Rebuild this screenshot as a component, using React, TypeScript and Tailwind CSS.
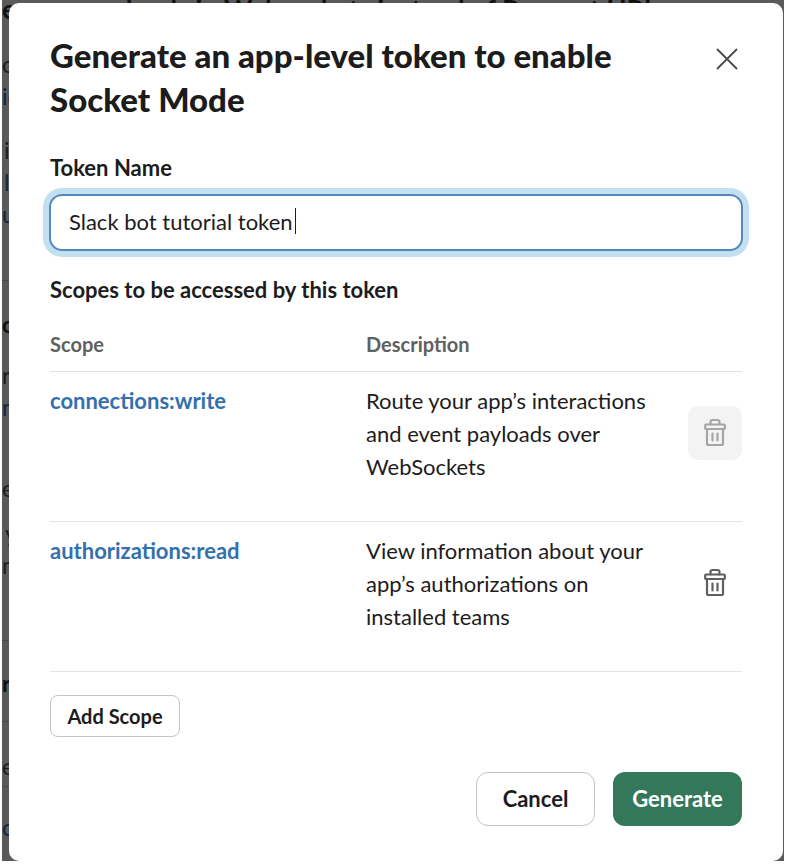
import { useState } from 'react';

const strip = [
  { t: 'e your payloads in Websockets instead of Request URL', c: 'h-8 text-[27px] leading-8 font-bold text-[#111] -mt-[7px]' },
  { t: 'over', c: 'mt-[23px] text-[#1b1b1b]' },
  { t: 'ic', c: 'text-[#12253d]' },
  { t: 'i', c: 'mt-[22px] pl-[2px] text-[#1b1b1b]' },
  { t: 'l', c: 'pl-[2px] text-[#12253d]' },
  { t: 'u', c: 'text-[#12253d]' },
];

function Trash() {
  return (
    <svg viewBox="0 0 24 30" className="h-[30px] w-6" fill="none" stroke="currentColor" strokeWidth="2.200" strokeLinejoin="round" strokeLinecap="round" aria-hidden="true">
      <path d="M7.500 6.500V4a2 2 0 0 1 2-2h5a2 2 0 0 1 2 2v2.500" />
      <rect x="2.200" y="6.500" width="19.600" height="4.500" rx="0.800" />
      <path d="M4 11v14.500a1.500 1.500 0 0 0 1.500 1.500h13a1.500 1.500 0 0 0 1.500-1.500V11M9.500 15.500v7M14.500 15.500v7" />
    </svg>
  );
}

function Row({ scope, text, disabled }: { scope: string; text: string; disabled?: boolean }) {
  return (
    <tr className="h-[150px] border-b border-[#e4e4e4] align-top">
      <td className="pt-3">
        <a href="#scope" className="text-[22px] leading-[33px] font-bold text-[#3470ad]">{scope}</a>
      </td>
      <td className="pt-3 text-[22px] leading-[33px]">{text}</td>
      <td className="pt-[34px]">
        <button
          type="button"
          disabled={disabled}
          aria-label={'Remove ' + scope}
          className="ml-auto flex h-[54px] w-[54px] items-center justify-center rounded-[10px] text-[#616061] disabled:bg-[#f3f3f3] disabled:text-[#a5a5a5]"
        >
          <Trash />
        </button>
      </td>
    </tr>
  );
}

export default function App() {
  const [name, setName] = useState('Slack bot tutorial token');
  return (
    <div className="bg-white pr-1 pb-[5px] pl-[2px] font-['Lato',sans-serif] text-[#1d1c1d]">
      <div className="relative overflow-hidden bg-[#5b5a5a] pt-[3px] pr-px pl-[7px]">
        <div aria-hidden="true" className="absolute inset-0 overflow-hidden text-[23px] leading-8 whitespace-nowrap">
          {strip.map((s) => (
            <div key={s.t} className={s.c}>{s.t}</div>
          ))}
          <div className="mt-[50px] border-t border-[#4a4a4a] pt-[27px] font-bold text-[#111]">c</div>
          <div className="mt-[19px] text-[#1b1b1b]">re</div>
          <div className="text-[#12253d]">n</div>
          <div className="mt-[49px] text-[#1b1b1b]">e</div>
          <div className="mt-[13px] pl-[3px] text-[#1b1b1b]">y</div>
          <div className="text-[#1b1b1b]">n</div>
          <div className="mt-[59px] border-t border-[#4a4a4a] pt-[26px] font-bold text-[#111]">r</div>
          <div className="mt-[22px] border-t border-[#4a4a4a] pt-[28px] text-[#1b1b1b]">e</div>
          <div className="mt-1 border-t border-[#4a4a4a] pt-[24px] text-[#12253d]">c</div>
        </div>
        <div role="dialog" aria-labelledby="title" className="relative rounded-[10px] bg-white px-[41px] pt-[30px] pb-[35px]">
          <header className="flex items-start justify-between gap-6">
            <h1 id="title" className="max-w-[600px] text-[33px] leading-[44px] font-black">
              Generate an app-level token to enable Socket Mode
            </h1>
            <button type="button" aria-label="Close" className="mt-[11px] flex h-[30px] w-[30px] items-center justify-center text-[#4c4b4c]">
              <svg viewBox="0 0 22 22" className="h-[22px] w-[22px]" stroke="currentColor" strokeWidth="1.800" strokeLinecap="round" aria-hidden="true">
                <path d="M1.500 1.500l19 19M20.500 1.500l-19 19" />
              </svg>
            </button>
          </header>
          <label htmlFor="token" className="mt-[31px] block text-[22px] leading-8 font-bold">Token Name</label>
          <div className="relative -mx-px mt-[10px]">
            <input
              id="token"
              value={name}
              onChange={(e) => setName(e.target.value)}
              className="block h-[57px] w-full rounded-[13px] border-2 border-[#5388bd] px-[18px] pb-[3px] text-[22px] caret-transparent ring-[6px] ring-[#c3e0f0] outline-none"
            />
            <span aria-hidden="true" className="pointer-events-none absolute top-[14px] left-[246px] h-[26px] w-px bg-[#1d1c1d]" />
          </div>
          <h2 className="mt-[23px] text-[22px] leading-8 font-bold">Scopes to be accessed by this token</h2>
          <table className="mt-[14px] w-full table-fixed border-collapse text-left">
            <thead>
              <tr className="h-[51px] border-b border-[#e4e4e4] align-top text-[20px] leading-[48px] text-[#616061]">
                <th className="font-bold">Scope</th>
                <th className="w-[300px] font-bold">Description</th>
                <th className="w-[76px]" />
              </tr>
            </thead>
            <tbody>
              <Row scope="connections:write" text="Route your app’s interactions and event payloads over WebSockets" disabled />
              <Row scope="authorizations:read" text="View information about your app’s authorizations on installed teams" />
            </tbody>
          </table>
          <button type="button" className="mt-[23px] h-[42px] w-[130px] rounded-[8px] border border-[#c4c4c4] text-[20px] font-bold">Add Scope</button>
          <footer className="mt-[35px] flex justify-end gap-[18px]">
            <button type="button" className="h-[54px] w-[119px] rounded-[12px] border border-[#c4c4c4] text-[22px] font-bold">Cancel</button>
            <button type="button" className="h-[54px] w-[129px] rounded-[12px] bg-[#34785c] text-[22px] font-bold text-white">Generate</button>
          </footer>
        </div>
      </div>
    </div>
  );
}
